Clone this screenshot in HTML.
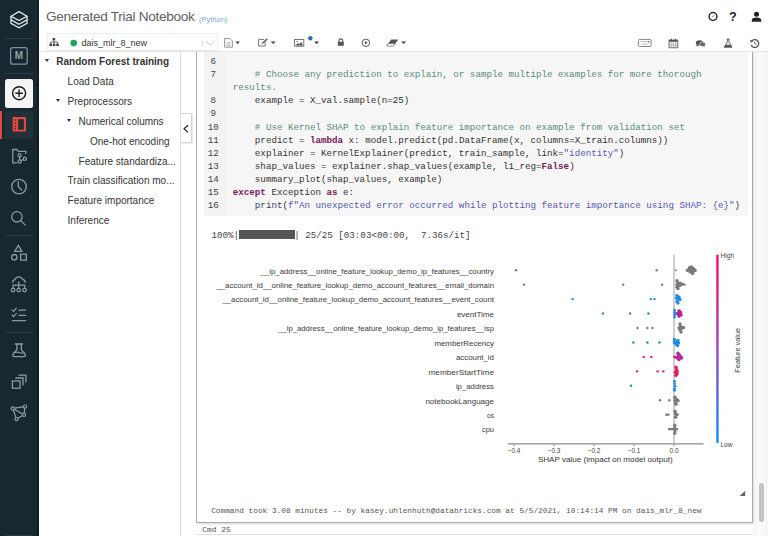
<!DOCTYPE html>
<html><head><meta charset="utf-8">
<style>
*{margin:0;padding:0;box-sizing:border-box}
html,body{width:768px;height:536px;overflow:hidden;background:#fff;font-family:"Liberation Sans",sans-serif;color:#333}
.abs{position:absolute}
#sb{left:0;top:0;width:39px;height:536px;background:#172830}
.sep{position:absolute;left:5px;width:28px;height:1px;background:#2a3b43}
.ico{position:absolute;left:0;width:39px;display:block}
#title{left:46px;top:8.6px;font-size:13.6px;color:#606060;letter-spacing:-0.3px;white-space:pre}
#py{left:199px;top:14.6px;font-size:7.5px;color:#7fa6cf;white-space:pre}
#toolbar{left:39px;top:0;width:729px;height:52px;border-bottom:1px solid #e6e6e6}
#sel{left:47px;top:33px;width:171px;height:18px;border:1px solid #efefef;border-bottom-color:#e9e9e9}
#clname{left:81.5px;top:38px;font-size:9px;color:#333;white-space:pre}
#toc{left:39px;top:52px;width:142px;height:484px;border-right:1px solid #dcdcdc}
.ti{position:absolute;font-size:10px;color:#333;white-space:pre}
.tri{position:absolute;width:0;height:0;border-left:2.5px solid transparent;border-right:2.5px solid transparent;border-top:3px solid #333}
#collapse{left:181px;top:113px;width:11px;height:30px;background:#fff;border:1px solid #d5d5d5;border-left:none;box-shadow:1px 1px 1px rgba(0,0,0,0.08)}
#cell{left:196px;top:52px;width:557px;height:471px;border:1px solid #ababab;border-top:none;box-shadow:1px 1px 2px rgba(0,0,0,0.16)}
#gut{left:203.5px;top:52px;width:22px;height:164px;background:#f3f3f3}
#code{left:225.5px;top:52px;width:522px;height:164px;background:#f6f6f6}
.ln{position:absolute;left:203.2px;width:20px;text-align:center;font-family:"Liberation Mono",monospace;font-size:9.2px;color:#444;line-height:13.1px}
.cl{position:absolute;left:232.8px;font-family:"Liberation Mono",monospace;font-size:9.2px;color:#333;white-space:pre;line-height:13.1px}
.cm{color:#5a8c78}
.kw{color:#7a1a5a;font-weight:bold}
.st{color:#5656b8}
#prog{left:211.5px;top:229px;font-family:"Liberation Mono",monospace;font-size:9.2px;color:#444;white-space:pre;line-height:13px}
#bar{left:238.7px;top:230px;width:56px;height:9px;background:#555}
#cmdtook{left:211.2px;top:506.5px;font-family:"Liberation Mono",monospace;font-size:7.79px;color:#555;white-space:pre}
#cmd25{left:202.3px;top:525px;font-family:"Liberation Mono",monospace;font-size:7.9px;color:#555;white-space:pre}
#sbar{left:758.8px;top:482.7px;width:4.8px;height:39px;background:#c4c4c4;border-radius:3px}
</style></head><body>

<div id="sb" class="abs">
  <div class="sep" style="top:38px"></div>
  <div class="sep" style="top:73px"></div>
  <div class="sep" style="top:235px"></div>
  <div class="sep" style="top:332px"></div>
  <div class="sep" style="top:535px"></div>
  <div class="abs" style="left:37px;top:0;width:2px;height:536px;background:#111e24"></div>
  <div class="abs" style="left:5px;top:79px;width:28px;height:28.5px;background:#f4f4f4;border-radius:2.5px"></div>
  <div class="abs" style="left:5px;top:110.5px;width:28px;height:28.5px;background:#1f323a;border-radius:1px"></div>
  <div class="abs" style="left:0;top:110.5px;width:2px;height:28.5px;background:#e8453c"></div>
</div>
<svg class="abs" style="left:0;top:0" width="39" height="536" viewBox="0 0 39 536" fill="none">
  <g stroke="#e4e8ea" stroke-width="1.3" stroke-linejoin="miter">
    <path d="M11 16.2 L19 11.6 L27 16.2 L19 20.6 Z"/>
    <path d="M11 16.2 V19.8 L19 24.3 L27 19.8 V16.2"/>
    <path d="M11 19.8 V23.3 L19 27.8 L27 23.3 V19.8"/>
  </g>
  <rect x="10.6" y="47.6" width="16.6" height="16.6" rx="2.2" stroke="#7f8f97" stroke-width="1.3"/>
  <text x="19" y="58.9" text-anchor="middle" font-family="Liberation Sans" font-weight="bold" font-size="10" fill="#95a3aa">M</text>
  <circle cx="19.1" cy="93.2" r="6.5" stroke="#1a1a1a" stroke-width="1.4"/>
  <path d="M19.1 89.4 V97 M15.3 93.2 H22.9" stroke="#1a1a1a" stroke-width="1.4"/>
  <rect x="12.6" y="117" width="13.4" height="14.6" rx="0.6" fill="#e8453c"/>
  <rect x="18.1" y="119.2" width="5.8" height="10.5" fill="#1f323a"/>
  <g fill="#1f323a"><circle cx="15.2" cy="120" r="0.75"/><circle cx="15.2" cy="123" r="0.75"/><circle cx="15.2" cy="126" r="0.75"/><circle cx="15.2" cy="129" r="0.75"/></g>
  <g stroke="#8c9aa0" stroke-width="1.3">
    <path d="M17 162.8 H12.8 V149.5 H16.8 L18.3 151.3 H25.8 V154"/>
    <circle cx="19.6" cy="155.3" r="1.6"/>
    <circle cx="19.6" cy="161.5" r="1.6"/>
    <circle cx="24.8" cy="158.8" r="1.6"/>
    <path d="M19.6 156.9 V159.9 M21.1 160.7 L23.3 159.5"/>
    <circle cx="19" cy="186.6" r="7.3"/>
    <path d="M18.3 181.2 V186.6 L21.8 190.2"/>
    <circle cx="16.9" cy="216.8" r="5.2"/>
    <path d="M20.6 220.6 L25.6 225.4"/>
    <path d="M18.3 245.4 L21.9 251.4 H14.7 Z"/>
    <circle cx="14.3" cy="257.2" r="2.7"/>
    <rect x="20.6" y="254.2" width="5.7" height="5.9"/>
    <path d="M12.6 282.6 Q12.4 280 15 279.6 Q16 276.8 18.6 276.8 Q21.6 276.8 22.6 279.3 Q25.4 279.8 25.2 282.7"/>
    <path d="M18.7 281.6 V288.2 M13.1 288.2 V285.1 H24.6 V288.2"/>
    <circle cx="13.1" cy="290.1" r="1.8"/>
    <circle cx="18.7" cy="290.1" r="1.8"/>
    <circle cx="24.6" cy="290.1" r="1.8"/>
    <path d="M11.8 309.6 L13.6 311.4 L16.6 307.9 M11.8 314.8 L13.6 316.6 L16.6 313.1"/>
    <path d="M18.4 310.2 H26.2 M18.4 315.4 H26.2 M12 320.6 H26.2"/>
    <path d="M14.8 344 H23 M16.9 344 V349.6 L13.2 353.8 Q11.8 356.6 14.6 356.6 H23.6 Q26.4 356.6 25 353.8 L21.3 349.6 V344"/>
    <path d="M13.6 353.4 Q16.2 351.4 19.2 352.6 Q22.2 353.8 24.6 352.4" stroke-width="1.1"/>
    <rect x="12.4" y="381" width="7.6" height="7.2"/>
    <path d="M15.4 378 H23 V385.4 M18.4 375.1 H25.9 V382.4"/>
    <path d="M12.7 408.4 L25 406.6 L24 414.7 L16.5 419.1 Z M12.7 408.4 L24 414.7"/>
  </g>
  
  <g fill="#172830" stroke="#8c9aa0" stroke-width="1.2">
    <circle cx="12.7" cy="408.4" r="1.6"/>
    <circle cx="25" cy="406.6" r="1.6"/>
    <circle cx="24" cy="414.7" r="1.6"/>
    <circle cx="16.5" cy="419.1" r="1.6"/>
  </g>
</svg>

<div id="toolbar" class="abs"></div>
<div id="title" class="abs">Generated Trial Notebook</div>
<div id="py" class="abs">(Python)</div>
<div id="sel" class="abs"></div>
<div id="clname" class="abs">dais_mlr_8_new</div>

<svg class="abs" style="left:0;top:0" width="768" height="56" viewBox="0 0 768 56" fill="none">
  <!-- select box contents -->
  <g fill="#444">
    <rect x="52.6" y="38" width="2.6" height="2.4"/>
    <rect x="49.4" y="43.6" width="2.6" height="2.5"/>
    <rect x="52.8" y="43.6" width="2.6" height="2.5"/>
    <rect x="56.2" y="43.6" width="2.6" height="2.5"/>
  </g>
  <path d="M53.9 40.4 V43.6 M50.7 43.6 V42 H57.5 V43.6" stroke="#444" stroke-width="0.8"/>
  <circle cx="73.7" cy="43.1" r="3.3" fill="#1fa463"/>
  <path d="M202.4 40.5 V46.2" stroke="#d0d0d0" stroke-width="0.8"/>
  <path d="M205.8 41.3 L210 45 L214.2 41.3" stroke="#c4c4c4" stroke-width="0.9"/>
  <!-- file icon -->
  <path d="M224.6 38.4 H229.8 L232.4 41 V47.2 H224.6 Z" stroke="#888" stroke-width="0.9"/>
  <path d="M226.5 42.5 H230.5 M226.5 44 H230.5 M226.5 45.5 H230.5" stroke="#aaa" stroke-width="0.8"/>
  <path d="M235.2 41.5 H240 L237.6 44 Z" fill="#444"/>
  <!-- edit icon -->
  <path d="M264 39.4 H258.6 V46 H265.2 V42.2" stroke="#777" stroke-width="1"/>
  <path d="M261.6 44 L262.2 42.4 L266.6 38.2 L267.8 39.4 L263.4 43.6 Z" fill="#666"/>
  <path d="M270.8 41.5 H275.6 L273.2 44 Z" fill="#444"/>
  <!-- image icon -->
  <rect x="294.6" y="39.4" width="9.2" height="6.8" stroke="#666" stroke-width="0.9"/>
  <path d="M295.6 45.6 L297.8 43 L299.4 44.2 L301.2 41.8 L303 45.6 Z" fill="#555"/>
  <circle cx="297" cy="41.4" r="0.7" fill="#555"/>
  <circle cx="310.3" cy="38.3" r="2.2" fill="#2d6db2"/>
  <path d="M314.2 41.5 H319 L316.6 44.2 Z" fill="#444"/>
  <!-- lock -->
  <path d="M339 41.9 V40.6 Q339 38.9 340.8 38.9 Q342.6 38.9 342.6 40.6 V41.9" stroke="#555" stroke-width="1.1"/>
  <rect x="337.8" y="41.8" width="6" height="4" fill="#555"/>
  <!-- play circle -->
  <circle cx="365.9" cy="42.8" r="3.7" stroke="#555" stroke-width="1"/>
  <path d="M364.9 41 L367.7 42.8 L364.9 44.6 Z" fill="#555"/>
  <!-- eraser -->
  <path d="M391.2 39.6 H398.4 L395.4 43.4 H388.2 Z" fill="#555"/>
  <path d="M388.2 43.4 H395.4 L393.4 46 H386.8 Q386.6 46 386.9 45.6 Z" stroke="#666" stroke-width="0.8"/>
  <path d="M401.1 41.5 H406.2 L403.65 44 Z" fill="#444"/>
  <!-- keyboard -->
  <rect x="638.4" y="39.4" width="12.7" height="7.1" rx="1.2" stroke="#777" stroke-width="0.9"/>
  <path d="M640.4 41.6 H649 M641.5 44.2 H647.5" stroke="#aaa" stroke-width="0.8"/>
  <circle cx="648.8" cy="42" r="0.7" fill="#555"/>
  <!-- calendar -->
  <rect x="669" y="40" width="8.8" height="7.8" stroke="#666" stroke-width="0.9"/>
  <rect x="669" y="40" width="8.8" height="1.8" fill="#555"/>
  <path d="M671.4 38.6 V40.6 M675.4 38.6 V40.6" stroke="#555" stroke-width="1"/>
  <path d="M671.2 42 V47.8 M673.4 42 V47.8 M675.6 42 V47.8 M669 43.9 H677.8 M669 45.8 H677.8" stroke="#888" stroke-width="0.5"/>
  <!-- chat -->
  <ellipse cx="699.6" cy="42.8" rx="3.8" ry="2.6" fill="#555"/>
  <path d="M697 44.6 L696 46.4 L699 45.2 Z" fill="#555"/>
  <ellipse cx="702.6" cy="44.3" rx="3" ry="2.2" fill="#666" stroke="#fff" stroke-width="0.6"/>
  <path d="M704.2 46 L705.3 47.3 L702.8 46.3 Z" fill="#666"/>
  <!-- flask -->
  <path d="M726.8 39 H729.4 M727.3 39 V42 L724.2 47.2 H732 L728.9 42 V39" stroke="#555" stroke-width="0.9"/>
  <path d="M725.6 44.8 H730.6 L732 47.2 H724.2 Z" fill="#555"/>
  <!-- history -->
  <path d="M751.4 41.6 A3.9 3.9 0 1 1 751.2 45" stroke="#555" stroke-width="1.3"/>
  <path d="M750.2 39.6 L750.6 42.8 L753.4 41.6 Z" fill="#555"/>
  <path d="M754.7 41.5 V43.7 L756.2 44.6" stroke="#555" stroke-width="0.9"/>
  <!-- top right -->
  <circle cx="713" cy="16.5" r="3.9" stroke="#2a2a2a" stroke-width="1.5"/>
  <path d="M712.4 17.2 L714.2 15.1" stroke="#444" stroke-width="0.8"/>
  <text x="732.8" y="21" text-anchor="middle" font-family="Liberation Sans" font-weight="bold" font-size="12.5" fill="#222">?</text>
  <circle cx="756.5" cy="14.2" r="2.5" fill="#222"/>
  <path d="M751.8 21.7 V20.2 Q751.8 17.4 756.5 17.4 Q761.2 17.4 761.2 20.2 V21.7 Z" fill="#222"/>
</svg>
<div id="toc" class="abs"></div>
<div class="ti" style="left:56.3px;top:56px;font-weight:bold">Random Forest training</div>
<div class="ti" style="left:67.6px;top:76px">Load Data</div>
<div class="ti" style="left:67.6px;top:96px">Preprocessors</div>
<div class="ti" style="left:78.6px;top:115.5px">Numerical columns</div>
<div class="ti" style="left:90px;top:135.5px">One-hot encoding</div>
<div class="ti" style="left:78.6px;top:155.5px">Feature standardiza...</div>
<div class="ti" style="left:67.6px;top:175px">Train classification mo...</div>
<div class="ti" style="left:67.6px;top:195px">Feature importance</div>
<div class="ti" style="left:67.6px;top:215px">Inference</div>
<div class="tri" style="left:45px;top:59px"></div>
<div class="tri" style="left:56px;top:99px"></div>
<div class="tri" style="left:67px;top:119px"></div>
<div id="collapse" class="abs"></div>
<svg class="abs" style="left:180px;top:120px" width="12" height="16" viewBox="180 120 12 16"><path d="M188 125.2 L184 128.8 L188 132.4" fill="none" stroke="#222" stroke-width="1.15"/></svg>

<div id="cell" class="abs"></div>
<div id="gut" class="abs"></div>
<div id="code" class="abs"></div>

<div class="ln" style="top:55px">6</div>
<div class="ln" style="top:68px">7</div>
<div class="ln" style="top:94.3px">8</div>
<div class="ln" style="top:107.4px">9</div>
<div class="ln" style="top:120.5px">10</div>
<div class="ln" style="top:133.6px">11</div>
<div class="ln" style="top:146.7px">12</div>
<div class="ln" style="top:159.8px">13</div>
<div class="ln" style="top:172.9px">14</div>
<div class="ln" style="top:186px">15</div>
<div class="ln" style="top:199.1px">16</div>

<div class="cl" style="top:68px"><span class="cm">    # Choose any prediction to explain, or sample multiple examples for more thorough</span></div>
<div class="cl" style="top:81.2px"><span class="cm">results.</span></div>
<div class="cl" style="top:94.3px">    example = X_val.sample(n=25)</div>
<div class="cl" style="top:120.5px"><span class="cm">    # Use Kernel SHAP to explain feature importance on example from validation set</span></div>
<div class="cl" style="top:133.6px">    predict = <span class="kw">lambda</span> x: model.predict(pd.DataFrame(x, columns=X_train.columns))</div>
<div class="cl" style="top:146.7px">    explainer = KernelExplainer(predict, train_sample, link=<span class="st">"identity"</span>)</div>
<div class="cl" style="top:159.8px">    shap_values = explainer.shap_values(example, l1_reg=<span class="kw">False</span>)</div>
<div class="cl" style="top:172.9px">    summary_plot(shap_values, example)</div>
<div class="cl" style="top:186px"><span class="kw">except</span> Exception <span class="kw">as</span> e:</div>
<div class="cl" style="top:199.1px">    <span style="color:#3b3b66">print</span>(<span class="st">f"An unexpected error occurred while plotting feature importance using SHAP: {e}"</span>)</div>

<div id="prog" class="abs">100%|          | 25/25 [03:03&lt;00:00,  7.36s/it]</div>
<div id="bar" class="abs"></div>

<!--PLOT-->
<svg class="abs" style="left:0;top:0" width="768" height="536" viewBox="0 0 768 536">
<defs><linearGradient id="cb" x1="0" y1="1" x2="0" y2="0"><stop offset="0" stop-color="#008bfb"/><stop offset="0.5" stop-color="#9a3dc6"/><stop offset="1" stop-color="#ff0052"/></linearGradient></defs>
<g font-family="Liberation Sans" font-size="7.9" fill="#3a3a3a">
<text x="260.6" y="273.5" textLength="233.4" lengthAdjust="spacingAndGlyphs">__ip_address__online_feature_lookup_demo_ip_features__country</text>
<text x="216.4" y="287.9" textLength="277.6" lengthAdjust="spacingAndGlyphs">__account_id__online_feature_lookup_demo_account_features__email_domain</text>
<text x="222.4" y="302.4" textLength="271.6" lengthAdjust="spacingAndGlyphs">__account_id__online_feature_lookup_demo_account_features__event_count</text>
<text x="456.9" y="316.8" textLength="37.1" lengthAdjust="spacingAndGlyphs">eventTime</text>
<text x="278.1" y="331.3" textLength="215.9" lengthAdjust="spacingAndGlyphs">__ip_address__online_feature_lookup_demo_ip_features__isp</text>
<text x="434.4" y="345.8" textLength="59.6" lengthAdjust="spacingAndGlyphs">memberRecency</text>
<text x="455.9" y="360.2" textLength="38.1" lengthAdjust="spacingAndGlyphs">account_id</text>
<text x="428.5" y="374.6" textLength="65.5" lengthAdjust="spacingAndGlyphs">memberStartTime</text>
<text x="455.9" y="389.1" textLength="38.1" lengthAdjust="spacingAndGlyphs">ip_address</text>
<text x="425.4" y="403.6" textLength="68.6" lengthAdjust="spacingAndGlyphs">notebookLanguage</text>
<text x="487.1" y="418.0" textLength="6.9" lengthAdjust="spacingAndGlyphs">os</text>
<text x="482.0" y="432.4" textLength="12.0" lengthAdjust="spacingAndGlyphs">cpu</text>
</g>
<path d="M674 254.7 V443.6" stroke="#b0b0b0" stroke-width="1.2"/>
<path d="M507.8 443.9 H703.6" stroke="#8c8c8c" stroke-width="1.2"/>
<path d="M514 443.6 V446.5" stroke="#8c8c8c" stroke-width="0.9"/>
<path d="M554 443.6 V446.5" stroke="#8c8c8c" stroke-width="0.9"/>
<path d="M594 443.6 V446.5" stroke="#8c8c8c" stroke-width="0.9"/>
<path d="M634 443.6 V446.5" stroke="#8c8c8c" stroke-width="0.9"/>
<path d="M674 443.6 V446.5" stroke="#8c8c8c" stroke-width="0.9"/>
<g font-family="Liberation Sans" font-size="6.4" fill="#444" text-anchor="middle">
<text x="514" y="452.8">−0.4</text>
<text x="554" y="452.8">−0.3</text>
<text x="594" y="452.8">−0.2</text>
<text x="634" y="452.8">−0.1</text>
<text x="674" y="452.8">0.0</text>
</g>
<text x="537.9" y="461.8" textLength="134.8" lengthAdjust="spacingAndGlyphs" font-family="Liberation Sans" font-size="7.4" fill="#333">SHAP value (impact on model output)</text>
<rect x="716.3" y="254.7" width="2.3" height="188.2" fill="url(#cb)"/>
<text x="720.6" y="258.2" font-family="Liberation Sans" font-size="6.6" fill="#444">High</text>
<text x="720.4" y="447" font-family="Liberation Sans" font-size="6.6" fill="#444">Low</text>
<text transform="translate(740.3 350.3) rotate(-90)" text-anchor="middle" textLength="44.7" lengthAdjust="spacingAndGlyphs" font-family="Liberation Sans" font-size="7.2" fill="#444">Feature value</text>
<circle cx="516.1" cy="270.2" r="1.2" fill="#7a7a7a"/>
<circle cx="656.7" cy="270.2" r="1.2" fill="#7a7a7a"/>
<circle cx="675.8" cy="270.2" r="1.0" fill="#7a7a7a"/>
<circle cx="687.5" cy="270.2" r="1.8" fill="#7a7a7a"/>
<circle cx="689.5" cy="267.9" r="1.8" fill="#7a7a7a"/>
<circle cx="691.5" cy="267.0" r="1.8" fill="#7a7a7a"/>
<circle cx="693.5" cy="268.7" r="1.8" fill="#7a7a7a"/>
<circle cx="695" cy="270.4" r="1.8" fill="#7a7a7a"/>
<circle cx="692" cy="270.7" r="1.8" fill="#7a7a7a"/>
<circle cx="690" cy="271.7" r="1.8" fill="#7a7a7a"/>
<circle cx="692.5" cy="273.4" r="1.8" fill="#7a7a7a"/>
<circle cx="689.5" cy="270.2" r="1.8" fill="#7a7a7a"/>
<circle cx="691.5" cy="269.2" r="1.8" fill="#7a7a7a"/>
<circle cx="693" cy="271.7" r="1.8" fill="#7a7a7a"/>
<circle cx="524" cy="284.65" r="1.2" fill="#7a7a7a"/>
<circle cx="623.2" cy="284.65" r="1.2" fill="#7a7a7a"/>
<circle cx="662.1" cy="284.65" r="1.2" fill="#7a7a7a"/>
<circle cx="677" cy="280.65" r="1.7" fill="#7a7a7a"/>
<circle cx="677.5" cy="282.65" r="1.7" fill="#7a7a7a"/>
<circle cx="678.5" cy="284.65" r="1.7" fill="#7a7a7a"/>
<circle cx="679.5" cy="285.65" r="1.7" fill="#7a7a7a"/>
<circle cx="677" cy="287.15" r="1.7" fill="#7a7a7a"/>
<circle cx="678" cy="288.65" r="1.7" fill="#7a7a7a"/>
<circle cx="681" cy="284.65" r="1.7" fill="#7a7a7a"/>
<circle cx="682.5" cy="284.15" r="1.7" fill="#7a7a7a"/>
<circle cx="680" cy="283.15" r="1.7" fill="#7a7a7a"/>
<circle cx="677" cy="284.65" r="1.7" fill="#7a7a7a"/>
<circle cx="684.6" cy="284.65" r="1.1" fill="#7a7a7a"/>
<circle cx="572.6" cy="299.09999999999997" r="1.2" fill="#1e88e5"/>
<circle cx="650.8" cy="299.09999999999997" r="1.2" fill="#1e88e5"/>
<circle cx="654.5" cy="299.09999999999997" r="1.2" fill="#1e88e5"/>
<circle cx="677" cy="295.59999999999997" r="1.7" fill="#1e88e5"/>
<circle cx="676.5" cy="298.09999999999997" r="1.7" fill="#1e88e5"/>
<circle cx="678" cy="299.09999999999997" r="1.7" fill="#1e88e5"/>
<circle cx="680" cy="299.59999999999997" r="1.7" fill="#1e88e5"/>
<circle cx="677" cy="301.59999999999997" r="1.7" fill="#1e88e5"/>
<circle cx="678" cy="303.09999999999997" r="1.7" fill="#1e88e5"/>
<circle cx="679" cy="297.09999999999997" r="1.7" fill="#1e88e5"/>
<circle cx="602.9" cy="313.54999999999995" r="1.2" fill="#1e88e5"/>
<circle cx="630" cy="313.54999999999995" r="1.2" fill="#5a7fb0"/>
<circle cx="648.5" cy="313.54999999999995" r="1.2" fill="#1e88e5"/>
<circle cx="674.6" cy="310.04999999999995" r="1.4" fill="#1e88e5"/>
<circle cx="674.6" cy="312.34999999999997" r="1.4" fill="#1e88e5"/>
<circle cx="674.6" cy="314.74999999999994" r="1.4" fill="#1e88e5"/>
<circle cx="674.6" cy="317.04999999999995" r="1.4" fill="#1e88e5"/>
<circle cx="676.5" cy="313.54999999999995" r="1.4" fill="#1e88e5"/>
<circle cx="679" cy="311.04999999999995" r="1.8" fill="#c0208a"/>
<circle cx="680.5" cy="312.54999999999995" r="1.8" fill="#c0208a"/>
<circle cx="681" cy="315.04999999999995" r="1.8" fill="#c0208a"/>
<circle cx="679" cy="316.04999999999995" r="1.8" fill="#c0208a"/>
<circle cx="678" cy="313.54999999999995" r="1.8" fill="#c0208a"/>
<circle cx="680" cy="314.04999999999995" r="1.8" fill="#c0208a"/>
<circle cx="637.5" cy="328.0" r="1.2" fill="#7a7a7a"/>
<circle cx="647.4" cy="328.0" r="1.2" fill="#7a7a7a"/>
<circle cx="652.4" cy="328.0" r="1.2" fill="#7a7a7a"/>
<circle cx="680" cy="324.0" r="1.7" fill="#7a7a7a"/>
<circle cx="680.5" cy="326.5" r="1.7" fill="#7a7a7a"/>
<circle cx="679" cy="328.0" r="1.7" fill="#7a7a7a"/>
<circle cx="682" cy="328.0" r="1.7" fill="#7a7a7a"/>
<circle cx="680" cy="330.0" r="1.7" fill="#7a7a7a"/>
<circle cx="681" cy="332.0" r="1.7" fill="#7a7a7a"/>
<circle cx="683.5" cy="327.5" r="1.7" fill="#7a7a7a"/>
<circle cx="681" cy="328.5" r="1.7" fill="#7a7a7a"/>
<circle cx="633.4" cy="342.45" r="1.2" fill="#1e88e5"/>
<circle cx="647.4" cy="342.45" r="1.2" fill="#1e88e5"/>
<circle cx="659.5" cy="342.45" r="1.2" fill="#1e88e5"/>
<circle cx="674.5" cy="339.45" r="1.7" fill="#1e88e5"/>
<circle cx="674.5" cy="342.45" r="1.7" fill="#1e88e5"/>
<circle cx="676.5" cy="342.45" r="1.7" fill="#1e88e5"/>
<circle cx="678" cy="340.45" r="1.7" fill="#1e88e5"/>
<circle cx="678.5" cy="342.95" r="1.7" fill="#1e88e5"/>
<circle cx="677.5" cy="345.45" r="1.7" fill="#1e88e5"/>
<circle cx="676" cy="343.95" r="1.7" fill="#1e88e5"/>
<circle cx="643.7" cy="356.9" r="1.2" fill="#e0206a"/>
<circle cx="651.3" cy="356.9" r="1.2" fill="#e0206a"/>
<circle cx="674.5" cy="356.9" r="1.4" fill="#e0206a"/>
<circle cx="676" cy="357.4" r="1.4" fill="#e0206a"/>
<circle cx="678" cy="353.4" r="1.8" fill="#b02aa0"/>
<circle cx="678.5" cy="355.9" r="1.8" fill="#b02aa0"/>
<circle cx="680" cy="356.9" r="1.8" fill="#b02aa0"/>
<circle cx="681.5" cy="357.9" r="1.8" fill="#b02aa0"/>
<circle cx="679" cy="359.4" r="1.8" fill="#b02aa0"/>
<circle cx="677.5" cy="357.9" r="1.8" fill="#b02aa0"/>
<circle cx="679.5" cy="355.4" r="1.8" fill="#b02aa0"/>
<circle cx="637.1" cy="371.34999999999997" r="1.2" fill="#e0206a"/>
<circle cx="657.6" cy="371.34999999999997" r="1.2" fill="#e0206a"/>
<circle cx="663.2" cy="371.34999999999997" r="1.2" fill="#e0206a"/>
<circle cx="676" cy="367.34999999999997" r="1.8" fill="#e0206a"/>
<circle cx="676.5" cy="369.84999999999997" r="1.8" fill="#e0206a"/>
<circle cx="675.5" cy="372.34999999999997" r="1.8" fill="#e0206a"/>
<circle cx="677" cy="373.84999999999997" r="1.8" fill="#e0206a"/>
<circle cx="676" cy="375.34999999999997" r="1.8" fill="#e0206a"/>
<circle cx="677" cy="371.34999999999997" r="1.8" fill="#e0206a"/>
<circle cx="631" cy="385.79999999999995" r="1.2" fill="#1e88e5"/>
<circle cx="674.5" cy="381.29999999999995" r="1.4" fill="#1e88e5"/>
<circle cx="674.5" cy="383.79999999999995" r="1.4" fill="#1e88e5"/>
<circle cx="675" cy="386.29999999999995" r="1.4" fill="#1e88e5"/>
<circle cx="674.5" cy="388.79999999999995" r="1.4" fill="#1e88e5"/>
<circle cx="674.5" cy="390.29999999999995" r="1.4" fill="#1e88e5"/>
<circle cx="660.1" cy="400.25" r="1.2" fill="#7a7a7a"/>
<circle cx="669.3" cy="400.25" r="1.2" fill="#7a7a7a"/>
<circle cx="675" cy="397.25" r="1.7" fill="#7a7a7a"/>
<circle cx="676.5" cy="399.25" r="1.7" fill="#7a7a7a"/>
<circle cx="678" cy="400.75" r="1.7" fill="#7a7a7a"/>
<circle cx="675.5" cy="402.75" r="1.7" fill="#7a7a7a"/>
<circle cx="676" cy="404.25" r="1.7" fill="#7a7a7a"/>
<circle cx="675" cy="400.25" r="1.7" fill="#7a7a7a"/>
<path d="M665.2 414.7 H669.5" stroke="#7a7a7a" stroke-width="2.2"/>
<circle cx="675" cy="411.2" r="1.7" fill="#7a7a7a"/>
<circle cx="675.5" cy="413.7" r="1.7" fill="#7a7a7a"/>
<circle cx="677" cy="414.7" r="1.7" fill="#7a7a7a"/>
<circle cx="675.5" cy="417.2" r="1.7" fill="#7a7a7a"/>
<path d="M668 429.15 H678" stroke="#7a7a7a" stroke-width="2.2"/>
<circle cx="674.8" cy="425.15" r="1.6" fill="#7a7a7a"/>
<circle cx="674.8" cy="427.65" r="1.6" fill="#7a7a7a"/>
<circle cx="675" cy="430.65" r="1.6" fill="#7a7a7a"/>
<circle cx="674.8" cy="433.15" r="1.6" fill="#7a7a7a"/>
</svg>
<!--/PLOT-->
<div id="cmdtook" class="abs">Command took 3.08 minutes -- by kasey.uhlenhuth@databricks.com at 5/5/2021, 10:14:14 PM on dais_mlr_8_new</div>
<div id="cmd25" class="abs">Cmd 25</div>
<div class="abs" style="left:754px;top:52px;width:14px;height:484px;background:linear-gradient(90deg,#f4f4f4,#fbfbfb 40%,#f7f7f7 70%,#fcfcfc)"></div>
<div class="abs" style="left:765.5px;top:52px;width:1px;height:484px;background:#efefef"></div>
<div id="sbar" class="abs"></div>
<div class="abs" style="left:196px;top:533.5px;width:557px;height:1px;background:#e2e2e2"></div>
<svg class="abs" style="left:736px;top:488px" width="12" height="12" viewBox="736 488 12 12"><path d="M745.2 490.8 V496 H739.6 Z" fill="#666"/></svg>

</body></html>
